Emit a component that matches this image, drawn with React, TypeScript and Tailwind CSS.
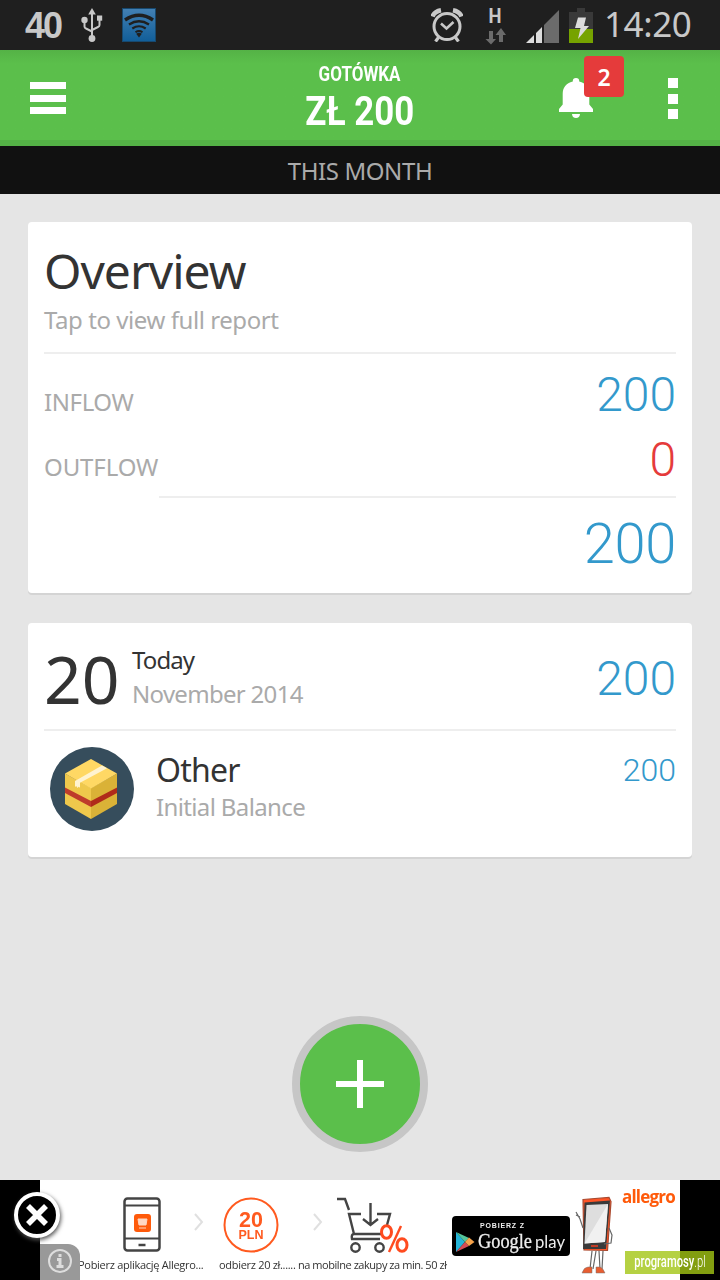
import type { ReactNode } from "react";

const uiFont = "font-['Noto_Sans','Open_Sans',sans-serif]";
const numFont = "font-[Roboto,sans-serif]";

function UsbIcon() {
  return (
    <svg width="22" height="34" viewBox="0 0 22 34" fill="none" stroke="#c8c8c8" strokeWidth="2">
      <path d="M11 5v25M3.500 12v6.500q0 1.500 1.500 2l6 3M18.500 10v7q0 1.500-1.500 2l-6 3" />
      <path d="M11 0l3.800 6.500H7.200z" fill="#c8c8c8" stroke="none" />
      <circle cx="3.500" cy="12" r="3.200" fill="#c8c8c8" stroke="none" />
      <circle cx="11" cy="30.500" r="3.400" fill="#c8c8c8" stroke="none" />
      <rect x="16" y="7.500" width="5.200" height="5.200" fill="#c8c8c8" stroke="none" />
    </svg>
  );
}

function WifiIcon() {
  return (
    <svg width="34" height="34" viewBox="0 0 34 34" fill="none" stroke="#1f1f1f">
      <defs>
        <linearGradient id="wifi" x1="0" y1="0" x2="0" y2="1">
          <stop offset="0" stopColor="#4380b3" />
          <stop offset="1" stopColor="#115e99" />
        </linearGradient>
      </defs>
      <rect x="0.500" y="0.500" width="33" height="33" fill="url(#wifi)" stroke="#17496f" />
      <path d="M3 12q14-9.500 28 0" strokeWidth="3.400" />
      <path d="M7 16.500q10-6.500 20 0" strokeWidth="2.300" />
      <path d="M10.300 20.500q6.700-4.500 13.400 0" strokeWidth="2.200" />
      <path d="M13.500 24.200q3.500-2.400 7 0" strokeWidth="2" />
      <path d="M17 29.500l-2.800-3.700q2.800-2 5.600 0z" fill="#1f1f1f" stroke="none" />
    </svg>
  );
}

function AlarmIcon() {
  return (
    <svg width="32" height="34" viewBox="0 0 32 34" fill="none" stroke="#c8c8c8">
      <circle cx="16" cy="18.500" r="13" strokeWidth="3" />
      <path d="M10 15.500l5.500 5 7-6.500" strokeWidth="2.600" />
      <path d="M7.500 29.500l-3 4M24.500 29.500l3 4" strokeWidth="3.200" />
      <path d="M1.500 8.500Q3.500 3.500 10 2.300M30.500 8.500Q28.500 3.500 22 2.300" strokeWidth="4.600" />
    </svg>
  );
}

function DataIcon() {
  return (
    <div className={`${numFont} flex w-[22px] flex-col items-center`}>
      <span className="h-[25px] -translate-x-px scale-x-[0.92] text-[20px] leading-[26px] font-bold">H</span>
      <svg width="22" height="17" viewBox="0 0 22 17" fill="#6b6b6b">
        <path d="M4 3h4v8h3l-5 5.500L.5 11H4zM14 14h4V7h3l-5-7-5.500 7H14z" />
      </svg>
    </div>
  );
}

function SignalIcon() {
  return (
    <svg width="33" height="33" viewBox="0 0 33 33">
      <path d="M33 0v33H18V15z" fill="#6b6b6b" />
      <path d="M16 17v16h-6V23zM8 25v8H0z" fill="#dcdcdc" />
    </svg>
  );
}

function BatteryIcon() {
  return (
    <svg width="24" height="35" viewBox="0 0 24 35">
      <path d="M8 0h8v4h8v31H0V4h8z" fill="#393939" />
      <path d="M0 21h24v14H0z" fill="#76a300" />
      <path d="M9 9.500h8l-2 8.500h5L9 31l2.500-11H6z" fill="#dcdcdc" />
    </svg>
  );
}

function BellIcon() {
  return (
    <svg width="36" height="41" viewBox="0 0 36 41" fill="#fff">
      <path d="M18 0a3.200 3.200 0 0 1 3.200 3.400C28 5 31.300 9.500 31.300 16v10.500L35 31v3H1v-3l3.700-4.500V16C4.700 9.500 8 5 14.800 3.400A3.200 3.200 0 0 1 18 0z" />
      <path d="M14 36h8q-.3 4-4 4t-4-4z" />
    </svg>
  );
}

function BoxIcon() {
  return (
    <svg width="84" height="84" viewBox="0 0 84 84">
      <circle cx="42" cy="42" r="42" fill="#364d5c" />
      <path d="M15 26.500L41 41v31L15 57z" fill="#efc84c" />
      <path d="M67 26.500L41 41v31l26-15z" fill="#dab237" />
      <path d="M41 12l26 14.500L41 41.500 15 26.500z" fill="#ffd864" />
      <path d="M15 40.500L41 54v6L15 46z" fill="#be3c2b" />
      <path d="M67 40.500L41 54v6l26-14z" fill="#b02a1a" />
      <path d="M52 18.500l5 2.800-27 14.500v5l-1.300-1-1.200 1.300-1.300-2-1.200.8V34z" fill="#fff3d0" />
    </svg>
  );
}

function StatusBar() {
  return (
    <div className="flex h-[50px] items-start bg-[#1f1f1f] text-[#c8c8c8]">
      <span className="ml-[25px] w-[56px] font-['Liberation_Sans',sans-serif] text-[36px] leading-[51px] font-bold tracking-[-2px]">40</span>
      <div className="mt-2"><UsbIcon /></div>
      <div className="mt-2 ml-[19px]"><WifiIcon /></div>
      <div className="mt-2 ml-auto"><AlarmIcon /></div>
      <div className="ml-[22px] pt-[3px]"><DataIcon /></div>
      <div className="mt-[10px] ml-[19px]"><SignalIcon /></div>
      <div className="mt-2 ml-[10px]"><BatteryIcon /></div>
      <span className={`${uiFont} ml-[11px] w-[116px] text-[35px] leading-[47px] tracking-[-0.4px]`}>14:20</span>
    </div>
  );
}

function Header() {
  return (
    <header className="relative flex h-24 justify-center border-b-[6px] border-[#54b246] bg-[#5bbf4b] bg-linear-to-b from-[#54b246] to-[#5bbf4b] to-15% text-white">
      <button type="button" aria-label="Menu" className="absolute top-8 left-[30px] flex flex-col gap-[5.500px]">
        <span className="h-[7px] w-9 bg-white" />
        <span className="h-[7px] w-9 bg-white" />
        <span className="h-[7px] w-9 bg-white" />
      </button>
      <div className={`${numFont} flex flex-col items-center pt-[10px] font-bold whitespace-nowrap`}>
        <span className="scale-x-[0.81] text-[21px] leading-[28px]">GOTÓWKA</span>
        <span className="scale-x-[0.87] text-[40px] leading-[47px]">ZŁ 200</span>
      </div>
      <button type="button" aria-label="Notifications" className="absolute top-7 left-[558px]">
        <BellIcon />
        <span className={`${uiFont} absolute -top-[22px] left-[26px] h-[41px] w-10 rounded bg-[#e53b3b] text-center text-[23px] leading-[43px] font-semibold`}>
          2
        </span>
      </button>
      <button type="button" aria-label="More" className="absolute top-7 right-[42px] flex flex-col gap-[5.500px]">
        <span className="size-[10px] bg-white" />
        <span className="size-[10px] bg-white" />
        <span className="size-[10px] bg-white" />
      </button>
    </header>
  );
}

function Card({ children, className }: { children: ReactNode; className: string }) {
  return <section className={`rounded bg-white px-4 shadow-[0_2px_0_#d4d4d4] ${className}`}>{children}</section>;
}

function OverviewCard() {
  return (
    <Card className="mt-7 h-[371px] pt-[18px]">
      <h1 className="h-[60px] text-[48px] leading-[62px] tracking-[-1px] text-[#333]">Overview</h1>
      <p className="h-[52px] text-[24px] leading-10 tracking-[-0.43px]">Tap to view full report</p>
      <div className="h-0.5 bg-[#eee]" />
      <div className="mt-2 flex items-baseline justify-between">
        <span className="text-[24px] leading-8 tracking-[-0.4px]">INFLOW</span>
        <span className={`${numFont} text-[48px] leading-[65px] font-light text-[#3399cc]`}>200</span>
      </div>
      <div className="flex items-baseline justify-between">
        <span className="text-[24px] leading-8 tracking-[-0.1px]">OUTFLOW</span>
        <span className={`${numFont} text-[48px] leading-[65px] font-light text-[#e53b3b]`}>0</span>
      </div>
      <div className="mt-1 ml-[115px] h-0.5 bg-[#eee]" />
      <p className={`${numFont} mt-[11px] text-right text-[56px] leading-[70px] font-light tracking-[-0.3px] text-[#3399cc]`}>200</p>
    </Card>
  );
}

function DayCard() {
  return (
    <Card className="mt-[30px] h-[234px]">
      <div className="flex h-[106px]">
        <span className="w-[88px] text-[66px] leading-[110px] text-[#333]">20</span>
        <div className="pt-[20px] text-[24px] leading-[34px]">
          <p className="tracking-[-0.9px] text-[#333]">Today</p>
          <p className="tracking-[-0.7px]">November 2014</p>
        </div>
        <span className={`${numFont} ml-auto text-[48px] leading-[111px] font-light text-[#3399cc]`}>200</span>
      </div>
      <div className="h-0.5 bg-[#eee]" />
      <div className="flex pt-4 pl-1.5">
        <BoxIcon />
        <div className="pl-[22px]">
          <p className="h-11 text-[32px] leading-[46px] tracking-[-0.8px] text-[#333]">Other</p>
          <p className="text-[24px] leading-8 tracking-[-0.63px]">Initial Balance</p>
        </div>
        <span className={`${numFont} ml-auto text-[32px] leading-[47px] font-light text-[#3399cc]`}>200</span>
      </div>
    </Card>
  );
}

function PhoneArt() {
  return (
    <svg width="38" height="56" viewBox="0 0 38 56" fill="none" stroke="#444" strokeWidth="2">
      <rect x="1.500" y="1.500" width="35" height="52" rx="3" strokeWidth="2.500" />
      <path d="M2 8.500h34M2 41.500h34" />
      <path d="M15.500 48h7" strokeWidth="2.500" />
      <rect x="11" y="17" width="17" height="18" rx="3" fill="#ff5a0a" stroke="none" />
      <path d="M15 22h9l-1 6h-7zM16 31h7" fill="#ffd7c2" stroke="#ffd7c2" strokeWidth="1" />
    </svg>
  );
}

function Chevron() {
  return (
    <svg width="12" height="18" viewBox="0 0 12 18" fill="none" stroke="#e0e0e0" strokeWidth="2">
      <path d="M2 1l7 8-7 8" />
    </svg>
  );
}

function CouponArt() {
  return (
    <svg width="56" height="56" viewBox="0 0 56 56" fill="#ff5a1f" fontFamily="Liberation Sans" fontWeight="700" textAnchor="middle">
      <circle cx="28" cy="28" r="26.500" fill="none" stroke="#ff5a1f" strokeWidth="2" />
      <text x="28" y="29.500" fontSize="21.500">20</text>
      <text x="28" y="41.500" fontSize="12.500">PLN</text>
    </svg>
  );
}

function CartArt() {
  return (
    <svg width="74" height="56" viewBox="0 0 74 56" fill="none" stroke="#444" strokeWidth="2.400">
      <path d="M1 2h8l4 11M25 17H13l5 20q-3 0-2 5h28M18 37h27M41 17h13l-3 11M34.500 6v21M27 22l7.500 6 7.500-6" />
      <circle cx="19.500" cy="50.500" r="4.200" />
      <circle cx="43.500" cy="50.500" r="4.200" />
      <g stroke="#ff4b1f">
        <ellipse cx="50.500" cy="35" rx="5" ry="6.300" strokeWidth="3" />
        <ellipse cx="66" cy="48" rx="5" ry="6.300" strokeWidth="3" />
        <path d="M65 29L53 55" />
      </g>
    </svg>
  );
}

function GooglePlayBadge() {
  return (
    <svg width="118" height="40" viewBox="0 0 118 40" fill="#eee">
      <rect width="118" height="40" rx="4" fill="#000" />
      <path d="M4 16v20l9-10z" fill="#25b4d8" />
      <path d="M4 16l9 10 4-4z" fill="#55c59a" />
      <path d="M4 36l9-10 4 4z" fill="#d54b55" />
      <path d="M17 21.500l5.500 4.500-5.500 4-4-4z" fill="#f5a34c" />
      <text x="28" y="11.500" fontFamily="Liberation Sans" fontWeight="700" fontSize="7" textLength="44">POBIERZ Z</text>
      <text x="26" y="32" fontFamily="Liberation Serif" fontSize="21" textLength="54" lengthAdjust="spacingAndGlyphs" stroke="#eee" strokeWidth="0.300">Google</text>
      <text x="83" y="32" fontFamily="Lato" fontSize="18" textLength="30" lengthAdjust="spacingAndGlyphs">play</text>
    </svg>
  );
}

function MascotArt() {
  return (
    <svg width="38" height="79" viewBox="0 0 38 79" fill="none" stroke="#666" strokeWidth="1.200">
      <path d="M8 3.500L34 1.500l2 4-3.500 49L9 54z" fill="#ff5426" stroke="#a94a30" />
      <path d="M9.500 6.500L35 4.500 31 53H8z" fill="#3a3a3a" stroke="none" />
      <path d="M11.500 9L33 8l-3 38-20.500 1.500z" fill="#dedede" stroke="none" />
      <path d="M33 8l-3 38-20.500 1.500z" fill="#f1f1f1" stroke="none" />
      <path d="M16 50h7" stroke="#c33b26" strokeWidth="2" />
      <path d="M8 32L5 23 1 16M1 19l4 2M34 32l3 7-1 8-7 1M17 55l-2 18M21 55l-3 18M24 55l1 18M28 55l-1 18" />
      <path d="M7 77q2-6 6-6h4v6zM21 77v-6h4q3 1 5 6z" fill="#e85d31" stroke="#777" strokeWidth="0.500" />
    </svg>
  );
}

function AdBanner() {
  return (
    <div className="relative flex h-[100px] shrink-0 bg-black px-10">
      <div className="w-[640px] overflow-hidden bg-white">
        <div className="flex h-[79px] items-start blur-[0.5px]">
          <div className="mt-[17px] ml-[83px]"><PhoneArt /></div>
          <div className="mt-[33px] ml-8"><Chevron /></div>
          <div className="mt-[17px] ml-[18px]"><CouponArt /></div>
          <div className="mt-[33px] ml-[33px]"><Chevron /></div>
          <div className="mt-[17px] ml-[12px]"><CartArt /></div>
          <div className="mt-9 ml-[42px]"><GooglePlayBadge /></div>
          <div className="mt-[16px] ml-[5px]"><MascotArt /></div>
          <span className="mt-[5px] ml-[9px] font-['Open_Sans',sans-serif] text-[17px] leading-[23px] font-bold tracking-[-0.8px] text-[#ff5a0a]">
            allegro
          </span>
        </div>
        <div className="flex pl-[38px] font-['Open_Sans',sans-serif] text-[11px] leading-[12px] whitespace-nowrap text-[#333] blur-[0.5px]">
          <span className="w-[141px] tracking-[-0.28px]">Pobierz aplikację Allegro...</span>
          <span className="w-[79px] tracking-[-0.3px]">odbierz 20 zł......</span>
          <span className="tracking-[-0.45px]">na mobilne zakupy za min. 50 zł</span>
        </div>
      </div>
      <div className="absolute bottom-0 left-10 h-9 w-10 rounded-tr-xl bg-[#999]">
        <svg className="mt-1 ml-[7px]" width="26" height="26" viewBox="0 0 26 26" fill="none" stroke="#ddd" strokeWidth="2">
          <circle cx="13" cy="13" r="11" />
          <path d="M13 6v3M10 11.500h3v7M9.500 18.500h7" strokeWidth="3" />
        </svg>
      </div>
      <button type="button" aria-label="Close ad" className="absolute top-3 left-[14px] size-[46px] rounded-full border-4 border-white bg-black shadow-[1px_2px_4px_#555]">
        <svg width="38" height="38" viewBox="0 0 38 38" stroke="#fff" strokeWidth="5.600">
          <path d="M10 10l18 18M28 10L10 28" />
        </svg>
      </button>
      <div className={`${numFont} absolute right-[6px] bottom-[6px] flex h-[23px] w-[89px] justify-center bg-[#a2c614]/80 text-[16px] leading-[22px] text-white`}>
        <span className="shrink-0 scale-x-[0.7] font-medium whitespace-nowrap">programosy<span className="font-light">.pl</span></span>
      </div>
    </div>
  );
}

export default function App() {
  return (
    <div className={`${uiFont} flex h-[1280px] w-[720px] flex-col overflow-hidden bg-[#e5e5e5] text-[#aaa]`}>
      <StatusBar />
      <Header />
      <div className="h-12 bg-[#111] text-center text-[24px] leading-[49px] tracking-[-0.4px]">THIS MONTH</div>
      <main className="flex flex-1 flex-col px-7">
        <OverviewCard />
        <DayCard />
        <button type="button" aria-label="Add transaction" className="mx-auto mt-[159px] flex size-[136px] items-center justify-center rounded-full border-8 border-[#c6c6c6] bg-[#5bbf4b]">
          <svg width="48" height="48" viewBox="0 0 48 48" stroke="#fff" strokeWidth="6">
            <path d="M24 0v48M0 24h48" />
          </svg>
        </button>
      </main>
      <AdBanner />
    </div>
  );
}
